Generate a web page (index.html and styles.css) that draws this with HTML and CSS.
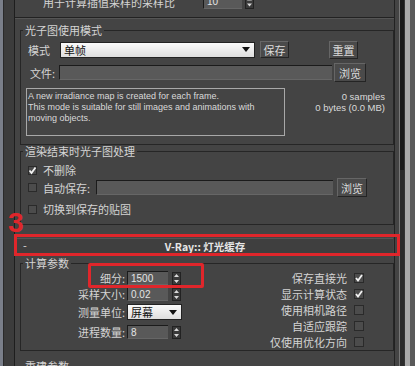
FILE: index.html
```html
<!DOCTYPE html>
<html lang="zh">
<head>
    <meta charset="UTF-8">
    <title>V-Ray 灯光缓存</title>
    <link rel="stylesheet" href="styles.css">
</head>
<body>
    <div class="frame-left"></div>
    <div class="panel">
        <div class="prev">
            <span class="prev-label">用于计算插值采样的采样比</span>
            <span class="field num w39">10</span>
            <svg class="spinner" width="9" height="14" viewBox="0 0 9 14"><rect x="0.5" y="0.5" width="8" height="13" fill="#3a3a3a" stroke="#222"/><path d="M2 5.5 L4.5 2.5 L7 5.5 Z M2 8.5 L4.5 11.5 L7 8.5 Z" fill="#d8d8d8"/></svg>
        </div>

        <fieldset class="group g-mode">
            <legend>光子图使用模式</legend>
            <div class="row r-mode">
                <span class="lbl w-mode">模式</span>
                <div class="combo w195">单帧<svg class="drop" width="8" height="5" viewBox="0 0 8 5"><path d="M0 0 H8 L4 5 Z" fill="#111"/></svg></div>
                <button class="btn save">保存</button>
                <button class="btn reset">重置</button>
            </div>
            <div class="row r-file">
                <span class="lbl w-file">文件:</span>
                <span class="field w273"></span>
                <button class="btn browse">浏览</button>
            </div>
            <div class="row r-info">
                <div class="desc">A new irradiance map is created for each frame.<br>This mode is suitable for still images and animations with<br>moving objects.</div>
                <div class="stats">0 samples<br>0 bytes (0.0 MB)</div>
            </div>
        </fieldset>

        <fieldset class="group g-end">
            <legend>渲染结束时光子图处理</legend>
            <div class="row r-keep">
                <span class="check"><svg width="9" height="9" viewBox="0 0 9 9"><path d="M1.5 4.5 L3.5 7 L7.5 1.5" fill="none" stroke="#f2f2f2" stroke-width="1.8"/></svg></span>
                <span class="lbl">不删除</span>
            </div>
            <div class="row r-auto">
                <span class="check"></span>
                <span class="lbl w-auto">自动保存:</span>
                <span class="field w237"></span>
                <button class="btn browse b2">浏览</button>
            </div>
            <div class="row r-switch">
                <span class="check"></span>
                <span class="lbl">切换到保存的贴图</span>
            </div>
        </fieldset>

        <div class="rollout">
            <span class="minus">-</span>
            <span class="title">V-Ray:: 灯光缓存</span>
        </div>

        <fieldset class="group g-calc">
            <legend>计算参数</legend>
            <div class="params">
                <div class="col-left">
                    <div class="prow p1">
                        <span class="plbl">细分:</span>
                        <span class="field num w41">1500</span>
                        <svg class="spinner" width="9" height="13" viewBox="0 0 9 13"><rect x="0.5" y="0.5" width="8" height="12" fill="#3a3a3a" stroke="#222"/><path d="M2 5 L4.5 2 L7 5 Z M2 8 L4.5 11 L7 8 Z" fill="#d8d8d8"/></svg>
                    </div>
                    <div class="prow p2">
                        <span class="plbl">采样大小:</span>
                        <span class="field num w41">0.02</span>
                        <svg class="spinner" width="9" height="13" viewBox="0 0 9 13"><rect x="0.5" y="0.5" width="8" height="12" fill="#3a3a3a" stroke="#222"/><path d="M2 5 L4.5 2 L7 5 Z M2 8 L4.5 11 L7 8 Z" fill="#d8d8d8"/></svg>
                    </div>
                    <div class="prow p3">
                        <span class="plbl">测量单位:</span>
                        <div class="combo w55">屏幕<svg class="drop" width="8" height="5" viewBox="0 0 8 5"><path d="M0 0 H8 L4 5 Z" fill="#111"/></svg></div>
                    </div>
                    <div class="prow p4">
                        <span class="plbl">进程数量:</span>
                        <span class="field num w41">8</span>
                        <svg class="spinner" width="9" height="13" viewBox="0 0 9 13"><rect x="0.5" y="0.5" width="8" height="12" fill="#3a3a3a" stroke="#222"/><path d="M2 5 L4.5 2 L7 5 Z M2 8 L4.5 11 L7 8 Z" fill="#d8d8d8"/></svg>
                    </div>
                </div>
                <div class="col-right">
                    <div class="crow"><span>保存直接光</span><span class="check big"><svg width="10" height="10" viewBox="0 0 10 10"><path d="M2 5 L4 7.5 L8 2" fill="none" stroke="#f2f2f2" stroke-width="1.8"/></svg></span></div>
                    <div class="crow"><span>显示计算状态</span><span class="check big"><svg width="10" height="10" viewBox="0 0 10 10"><path d="M2 5 L4 7.5 L8 2" fill="none" stroke="#f2f2f2" stroke-width="1.8"/></svg></span></div>
                    <div class="crow"><span>使用相机路径</span><span class="check big"></span></div>
                    <div class="crow"><span>自适应跟踪</span><span class="check big"></span></div>
                    <div class="crow"><span>仅使用优化方向</span><span class="check big"></span></div>
                </div>
            </div>
        </fieldset>

        <fieldset class="group g-next">
            <legend>重建参数</legend>
        </fieldset>

        <span class="mark-num">3</span>
        <span class="mark-box box-rollout"></span>
        <span class="mark-box box-subdiv"></span>
    </div>
    <div class="frame-right">
        <div class="gap"></div>
        <div class="track">
            <div class="track-top"></div>
            <div class="track-low"></div>
        </div>
        <div class="rim"></div>
    </div>
</body>
</html>
```
FILE: styles.css
```css
body {
    margin: 0;
    height: 366px;
    overflow: hidden;
    display: flex;
    background: #444;
    color: #d4d4d4;
    font-family: "Noto Sans CJK SC", "Noto Sans", sans-serif;
    font-size: 11px;
    line-height: 14px;
}

.frame-left {
    flex: none;
    width: 15px;
    background: linear-gradient(to right, #7a7f8a 0 3px, #2a2a2a 3px 4px, #3c3c3c 4px 14px, #1e1e1e 14px 15px);
}

.panel {
    flex: none;
    width: 379px;
    position: relative;
}

.frame-right {
    flex: none;
    width: 21px;
    display: flex;
    border-left: 1px solid #222;
}

.frame-right .gap {
    width: 4px;
    background: #444;
    border-right: 1px solid #777;
}

.track {
    width: 4px;
    display: flex;
    flex-direction: column;
}

.track-top {
    height: 170px;
    background: #1a1a1a;
}

.track-low {
    flex: 1;
    background: #2a2a2a;
}

.rim {
    flex: 1;
    background: linear-gradient(to right, #333 0 1px, #a9a9a9 1px 6px, #5a5a5a 6px);
}

/* previous group (cut off at the top) */
.prev {
    height: 31px;
    margin-top: -14px;
    display: flex;
    align-items: center;
    padding-left: 28px;
    border-bottom: 1px solid #222;
    box-shadow: 0 1px 0 #555;
}

.prev-label {
    width: 160px;
}

.prev .spinner {
    margin-left: 3px;
}

/* group boxes */
.group {
    box-sizing: border-box;
    width: 374px;
    margin: 0 0 0 5px;
    padding: 0 8px 0 7px;
    border: 1px solid #262626;
    min-width: 0;
}

.group legend {
    padding: 0 2px;
    margin-left: -5px;
    line-height: 12px;
}

.g-mode {
    margin-top: 6px;
    padding-bottom: 8px;
}

.g-end {
    margin-top: 0;
    padding-bottom: 8px;
}

.g-calc {
    margin-top: 2px;
    padding-bottom: 0;
}

.g-next {
    margin-top: 9px;
    height: 30px;
}

.row {
    display: flex;
    align-items: center;
}

.r-mode {
    margin-top: 5px;
    height: 17px;
}

.r-file {
    margin-top: 5px;
    height: 19px;
}

.r-info {
    margin-top: 6px;
    align-items: flex-start;
}

.w-mode {
    width: 32px;
}

.w-file {
    width: 29px;
    padding-left: 2px;
}

.w-auto {
    width: 53px;
}

/* inputs */
.field {
    box-sizing: border-box;
    height: 15px;
    background: #595959;
    border-top: 1px solid #1b1b1b;
    border-left: 1px solid #1b1b1b;
    border-bottom: 1px solid #666;
    color: #e4e4e4;
    font-family: "Liberation Sans", sans-serif;
    font-size: 10px;
    line-height: 13px;
    padding-left: 3px;
}

.w39 { width: 39px; }
.w41 { width: 41px; height: 14px; }
.w273 { width: 273px; }
.w237 { width: 237px; }

.combo {
    box-sizing: border-box;
    height: 16px;
    display: flex;
    align-items: center;
    justify-content: space-between;
    padding: 0 4px 0 3px;
    background: linear-gradient(#fafafa, #dedede);
    border: 1px solid #222;
    color: #111;
    line-height: 14px;
}

.w195 { width: 195px; }
.w55 { width: 55px; }

.btn {
    box-sizing: border-box;
    height: 17px;
    padding: 0;
    background: #4a4a4a;
    border: 1px solid;
    border-color: #666 #242424 #242424 #666;
    color: #dcdcdc;
    font-family: "Noto Sans CJK SC", sans-serif;
    font-size: 11px;
    line-height: 14px;
}

.save {
    width: 29px;
    margin-left: 5px;
}

.reset {
    width: 29px;
    height: 18px;
    margin-left: 40px;
}

.browse {
    width: 32px;
    height: 19px;
    margin-left: 2px;
}

.b2 {
    width: 30px;
    margin-left: 4px;
}

.desc {
    box-sizing: border-box;
    width: 259px;
    height: 48px;
    margin-left: -2px;
    padding: 2px 0 0 1px;
    border: 1px solid #a8a8a8;
    font-family: "Liberation Sans", sans-serif;
    font-size: 9px;
    line-height: 11px;
    color: #dadada;
}

.stats {
    flex: 1;
    text-align: right;
    padding-top: 3px;
    font-family: "Liberation Sans", sans-serif;
    font-size: 9.5px;
    line-height: 11px;
    color: #dadada;
}

/* checkboxes */
.check {
    box-sizing: border-box;
    width: 9px;
    height: 9px;
    display: inline-flex;
    background: #4c4c4c;
    border: 1px solid #2a2a2a;
}

.check svg {
    margin: -1px;
}

.check.big {
    width: 10px;
    height: 10px;
    margin-left: 7px;
}

.row .check + .lbl {
    margin-left: 6px;
}

.r-keep {
    margin-top: 6px;
    height: 14px;
}

.r-auto {
    margin-top: 1px;
    height: 19px;
}

.r-switch {
    margin-top: 5px;
    height: 14px;
}

/* rollout header */
.rollout {
    margin: 13px 1px 0 2px;
    height: 15px;
    display: flex;
    align-items: center;
    justify-content: center;
    position: relative;
    background: #3f3f3f;
    border-top: 1px solid #555;
    border-bottom: 1px solid #2a2a2a;
}

.rollout .minus {
    position: absolute;
    left: 6px;
    top: -1px;
    color: #ddd;
}

.rollout .title {
    font-weight: bold;
    font-size: 10.5px;
    color: #e6e6e6;
}

/* calc params */
.params {
    display: flex;
}

.col-left {
    width: 154px;
}

.prow {
    display: flex;
    align-items: center;
    height: 14px;
}

.p1 { margin-top: 2px; }
.p2 { margin-top: 2px; }
.p3 { margin-top: 3px; height: 16px; }
.p4 { margin-top: 5px; }

.plbl {
    width: 97px;
    margin-right: 2px;
    text-align: right;
}

.prow .spinner {
    margin-left: 4px;
}

.col-right {
    margin-left: auto;
    margin-right: 21px;
    padding-top: 1px;
}

.crow {
    height: 16px;
    display: flex;
    align-items: center;
    justify-content: flex-end;
}

/* red annotations drawn on top of the screenshot */
.mark-num {
    position: absolute;
    left: -7px;
    top: 210px;
    color: #e0262b;
    font-family: "Liberation Sans", sans-serif;
    font-weight: bold;
    font-size: 28px;
    line-height: 26px;
}

.mark-box {
    position: absolute;
    box-sizing: border-box;
    border: 3px solid #e0262b;
}

.box-rollout {
    left: -1px;
    top: 234px;
    width: 386px;
    height: 22px;
}

.box-subdiv {
    left: 73px;
    top: 263px;
    width: 116px;
    height: 25px;
    border-radius: 2px;
}
```
